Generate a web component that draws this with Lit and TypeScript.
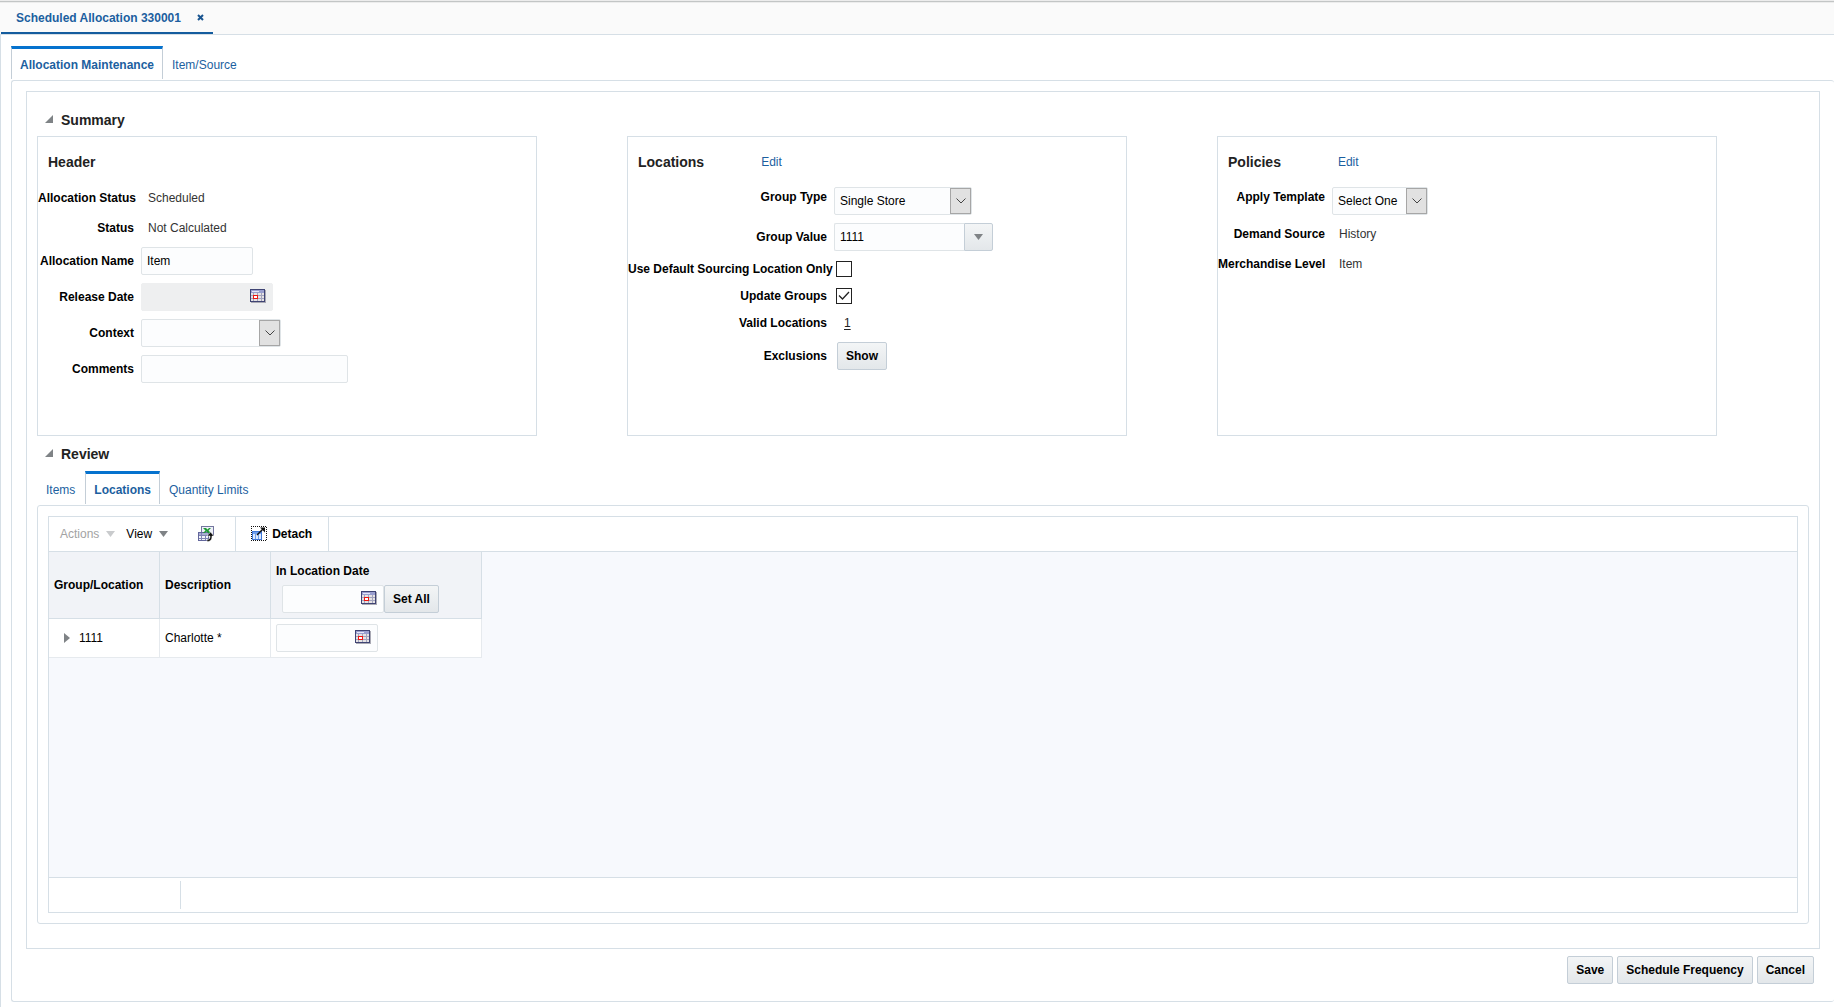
import { LitElement, html, css, svg, nothing } from "lit";
import { customElement } from "lit/decorators.js";
import { classMap } from "lit/directives/class-map.js";

const calendarIcon = svg`
  <svg class="icon" width="16" height="14" viewBox="0 0 16 14" shape-rendering="crispEdges" aria-hidden="true">
    <rect x="1" y="1" width="15" height="13" fill="#a9a9b4" />
    <rect x="0" y="0" width="15" height="13" fill="#3f4474" />
    <rect x="1" y="1" width="13" height="3" fill="#9a9fcf" />
    <rect x="2" y="2" width="7" height="1" fill="#e4e6f8" />
    <rect x="1" y="4" width="13" height="8" fill="#e6e3e4" />
    <path d="M1 6.5h13M1 9.5h13M3.5 4v8M7.5 4v8M11.5 4v8" stroke="#a3a4bd" fill="none" />
    <rect x="3.5" y="6.5" width="4" height="3" fill="#ffffff" stroke="#ee1510" />
  </svg>`;

const exportIcon = svg`
  <svg class="icon" width="16" height="16" viewBox="0 0 16 16" shape-rendering="crispEdges" aria-hidden="true">
    <rect x="3.5" y="0.5" width="12" height="9" fill="#eef0f8" stroke="#74779f" />
    <rect x="0.5" y="6.5" width="10" height="8" fill="#f3f4fa" stroke="#63679c" />
    <rect x="1" y="7" width="9" height="2" fill="#a9acd2" />
    <path d="M1 9.5h9M1 12.5h9M3.5 7v7M7.5 9v5" stroke="#7f83b3" fill="none" />
    <path d="M5 2h3l1.500 1.500L11 2h2l-2.500 2.500L13 7h-3L8.500 5.500 7 7H5l2.500-2.500z" fill="#1e9a34" shape-rendering="auto" />
    <path d="M12.500 6l3.500 4h-2c0 4-1.500 5.500-5 5.500v-2c2.500 0 3-1 3-3.500H9z" fill="#111" stroke="#fff" stroke-width="0.500" shape-rendering="auto" />
  </svg>`;

const detachIcon = svg`
  <svg class="icon" width="16" height="16" viewBox="0 0 16 16" shape-rendering="crispEdges" aria-hidden="true">
    <path d="M0 0.500h16M0 14.500h16M0.500 0v15M15.500 1v14" fill="none" stroke="#111" stroke-dasharray="1 1" />
    <rect x="1.500" y="5.500" width="9" height="8" fill="#dbe9ff" stroke="#3f78d8" />
    <rect x="2" y="6" width="8" height="2" fill="#6fa0ee" />
    <path d="M4.500 8v5M7.500 8v5" stroke="#6f9fe8" fill="none" />
    <path d="M6 9l6-6" stroke="#111" stroke-width="1.500" shape-rendering="auto" />
    <path d="M9 1.500H14v5z" fill="#111" shape-rendering="auto" />
  </svg>`;

const closeIcon = svg`
  <svg class="icon" width="7" height="7" viewBox="0 0 7 7" aria-hidden="true">
    <path d="M1 1l5 5M6 1L1 6" stroke="#1a5590" stroke-width="2" fill="none" />
  </svg>`;

const discloseIcon = svg`
  <svg class="icon" width="8" height="8" viewBox="0 0 8 8" aria-hidden="true"><path d="M8 0v8H0z" fill="#7f8386" /></svg>`;

const expandIcon = svg`
  <svg class="icon" width="6" height="10" viewBox="0 0 6 10" aria-hidden="true"><path d="M0 0l6 5-6 5z" fill="#7f8386" /></svg>`;

const downIcon = (fill: string) => svg`
  <svg class="icon" width="9" height="6" viewBox="0 0 9 6" aria-hidden="true"><path d="M0 0h9L4.500 6z" fill=${fill} /></svg>`;

interface Tab {
  text: string;
  active?: boolean;
}

@customElement("app-root")
export class AppRoot extends LitElement {
  static styles = css`
    :host {
      display: block;
      font: 12px/20px "Liberation Sans", Arial, sans-serif;
      color: #000;
      background: #fff;
    }
    * {
      box-sizing: border-box;
    }
    button,
    input,
    select {
      font: inherit;
      color: inherit;
      margin: 0;
    }
    h2,
    h3 {
      margin: 0;
      font-size: 14px;
      color: #222;
    }
    a {
      color: #1c5f9f;
      text-decoration: none;
    }
    .icon {
      display: block;
      flex: none;
    }
    .page {
      min-height: 100vh;
      display: flex;
      flex-direction: column;
    }
    .doc-bar {
      display: flex;
      height: 35px;
      padding-left: 1px;
      background: #fafafa;
      border-bottom: 1px solid #d6dfe6;
      box-shadow: inset 0 1px #ececec, inset 0 2px #c2c5c5, inset 0 3px #ececec;
    }
    .doc-tab {
      display: flex;
      align-items: center;
      gap: 16px;
      padding: 3px 9px 0 15px;
      border-bottom: 2px solid #145c9e;
      font-weight: bold;
    }
    .plain {
      border: 0;
      background: none;
      padding: 0;
      display: flex;
      align-items: center;
    }
    .body {
      flex: 1;
      display: flex;
      flex-direction: column;
      padding: 11px 0 5px 10px;
      border-left: 1px solid #d6dfe6;
    }
    .tabs {
      display: flex;
      height: 33px;
      margin-bottom: 1px;
    }
    .tab {
      padding: 9px 10px 0 9px;
    }
    .tab.active {
      padding: 6px 8px 0 8px;
      border: 1px solid #c4ced7;
      border-top: 3px solid #0572ce;
      border-bottom: 0;
      font-weight: bold;
    }
    .panel {
      flex: 1;
      display: flex;
      flex-direction: column;
      border: 1px solid #d6dfe6;
      border-radius: 3px;
    }
    .outer {
      padding: 10px 14px 17px 14px;
      border-right: 0;
    }
    .content {
      flex: 1;
      display: flex;
      flex-direction: column;
      padding: 18px 10px 24px 10px;
      border: 1px solid #d6dfe6;
    }
    .section-title {
      display: flex;
      align-items: center;
      gap: 8px;
      padding-left: 8px;
    }
    .section-title .plain {
      padding-bottom: 3px;
    }
    .cards {
      display: grid;
      grid-template-columns: repeat(3, 1fr);
      gap: 90px;
      margin: 6px 92px 8px 0;
    }
    .card {
      min-height: 300px;
      padding-top: 15px;
      border: 1px solid #d6dfe6;
    }
    .card-title {
      display: flex;
      gap: 57px;
      padding-left: 10px;
      margin-bottom: 11px;
    }
    .row {
      display: flex;
      align-items: center;
      gap: 7px;
      min-height: 30px;
    }
    .row.field {
      padding: 4px 0;
    }
    .row.tight {
      min-height: 27px;
    }
    .row.action {
      padding: 6px 0;
    }
    .row.top .label {
      align-self: flex-start;
    }
    .label {
      flex: none;
      width: 96px;
      text-align: right;
      white-space: nowrap;
      font-weight: bold;
    }
    .wide .label {
      width: 199px;
    }
    .medium .label {
      width: 107px;
    }
    .value {
      padding-left: 7px;
      color: #333;
    }
    .count {
      padding-left: 10px;
      color: #222;
      text-decoration: underline;
      text-underline-offset: 2px;
    }
    .box {
      height: 28px;
      padding: 0 5px;
      border: 1px solid #dfe4e7;
      border-radius: 2px;
      background: #fcfdfe;
    }
    .name {
      width: 112px;
    }
    .comments {
      width: 207px;
    }
    .date {
      display: flex;
      align-items: center;
      width: 102px;
      padding: 0 6px 2px 5px;
    }
    .date.disabled {
      width: 132px;
      background: #eeeff0;
      border-color: #eeeff0;
    }
    .date input {
      flex: 1;
      min-width: 0;
      border: 0;
      padding: 0;
      background: none;
    }
    .select {
      display: grid;
      width: 138px;
    }
    .select.context {
      width: 140px;
    }
    .select.template {
      width: 96px;
    }
    .select > * {
      grid-area: 1 / 1;
    }
    .select select {
      appearance: none;
      width: 100%;
      padding: 0 22px 0 5px;
    }
    .chevron {
      justify-self: end;
      align-self: center;
      display: grid;
      place-items: center;
      width: 21px;
      height: 26px;
      margin-right: 1px;
      border: 1px solid #a6a6a6;
      background: #e1e1e1;
      pointer-events: none;
    }
    .combo {
      display: flex;
      width: 159px;
    }
    .combo .box {
      flex: 1;
      min-width: 0;
      border-right: 0;
      border-radius: 2px 0 0 2px;
    }
    .btn {
      height: 28px;
      padding: 0 8px;
      border: 1px solid #c4ced7;
      border-radius: 2px;
      background: linear-gradient(#f3f5f6, #e3e7ea);
      font-weight: bold;
    }
    .combo .btn {
      padding: 0 9px;
      border-radius: 0 2px 2px 0;
    }
    .btn.show {
      margin-left: 3px;
    }
    .check {
      display: grid;
      place-items: center;
      margin-left: 2px;
    }
    .check > * {
      grid-area: 1 / 1;
    }
    .check input {
      appearance: none;
      width: 16px;
      height: 16px;
      border: 1px solid #222;
      background: #fff;
    }
    .check .icon {
      pointer-events: none;
    }
    .review-tabs {
      margin-top: 7px;
    }
    .review {
      padding: 10px;
    }
    .grid-frame {
      flex: 1;
      display: flex;
      flex-direction: column;
      border: 1px solid #d6dfe6;
    }
    .toolbar {
      display: flex;
      height: 35px;
      border-bottom: 1px solid #d6dfe6;
    }
    .tool-group {
      display: flex;
      align-items: center;
      gap: 11px;
      padding: 0 14px 0 11px;
      border-right: 1px solid #d6dfe6;
    }
    .tool-group.export {
      padding: 0 21px 0 15px;
    }
    .tool-group.detach {
      padding: 0 16px 0 15px;
    }
    .menu {
      gap: 7px;
    }
    .menu:disabled {
      color: #a3a3a3;
    }
    .detach .plain {
      gap: 5px;
      font-weight: bold;
    }
    .grid-body {
      flex: 1;
      background: #f7f9fd;
    }
    .table {
      border-collapse: separate;
      border-spacing: 0;
      table-layout: fixed;
      width: 433px;
    }
    .col-group,
    .col-desc {
      width: 111px;
    }
    th {
      height: 67px;
      padding: 0 5px;
      text-align: left;
      background: #f1f3f7;
      border-right: 1px solid #d6dfe6;
      border-bottom: 1px solid #d6dfe6;
    }
    .date-head {
      padding-top: 4px;
    }
    td {
      height: 39px;
      padding: 0 5px;
      background: #fff;
      border-right: 1px solid #e6eaee;
      border-bottom: 1px solid #e6eaee;
    }
    .set-all {
      display: flex;
      padding: 4px 0 0 6px;
    }
    .tree-cell {
      display: flex;
      align-items: center;
      gap: 9px;
      padding-left: 10px;
    }
    .grid-foot {
      height: 35px;
      padding: 3px 0;
      border-top: 1px solid #d6dfe6;
    }
    .foot-pane {
      width: 132px;
      height: 28px;
      border-right: 1px solid #d6dfe6;
    }
    .actions {
      display: flex;
      justify-content: flex-end;
      gap: 4px;
      padding: 7px 6px 0 0;
    }
  `;

  private tabs(items: Tab[], extra = "") {
    return html`<nav class="tabs ${extra}">
      ${items.map(
        (t) => html`<a href="#" class=${classMap({ tab: true, active: !!t.active })} aria-current=${t.active ? "page" : nothing}>${t.text}</a>`,
      )}
    </nav>`;
  }

  private textRow(label: string, value: string) {
    return html`<div class="row"><span class="label">${label}</span><span class="value">${value}</span></div>`;
  }

  private select(id: string, kind: string, value: string) {
    return html`<div class="select ${kind}">
      <select class="box" id=${id}>
        <option>${value}</option>
      </select>
      <span class="chevron">
        <svg class="icon" width="10" height="6" viewBox="0 0 10 6" aria-hidden="true">
          <path d="M0.500 0.500L5 5l4.500-4.500" fill="none" stroke="#444" />
        </svg>
      </span>
    </div>`;
  }

  private date(id: string, label: string, disabled = false) {
    return html`<div class=${classMap({ box: true, date: true, disabled })}>
      <input type="text" id=${id} aria-label=${label} ?disabled=${disabled} />
      <button class="plain" aria-label="Select date" ?disabled=${disabled}>${calendarIcon}</button>
    </div>`;
  }

  private check(id: string, label: string, checked: boolean) {
    return html`<div class="row tight">
      <label class="label" for=${id}>${label}</label>
      <span class="check">
        <input type="checkbox" id=${id} ?checked=${checked} />
        ${checked
          ? html`<svg class="icon" width="12" height="9" viewBox="0 0 12 9" aria-hidden="true">
              <path d="M1 4.500L4.500 8 11 1" fill="none" stroke="#222" stroke-width="1.300" />
            </svg>`
          : nothing}
      </span>
    </div>`;
  }

  private header() {
    return html`<section class="card">
      <div class="card-title"><h3>Header</h3></div>
      ${this.textRow("Allocation Status", "Scheduled")} ${this.textRow("Status", "Not Calculated")}
      <div class="row field">
        <label class="label" for="name">Allocation Name</label>
        <input class="box name" id="name" type="text" value="Item" />
      </div>
      <div class="row field">
        <label class="label" for="release">Release Date</label>
        ${this.date("release", "Release Date", true)}
      </div>
      <div class="row field">
        <label class="label" for="context">Context</label>
        ${this.select("context", "context", "")}
      </div>
      <div class="row field">
        <label class="label" for="comments">Comments</label>
        <input class="box comments" id="comments" type="text" />
      </div>
    </section>`;
  }

  private locations() {
    return html`<section class="card wide">
      <div class="card-title"><h3>Locations</h3><a href="#">Edit</a></div>
      <div class="row field top">
        <label class="label" for="group-type">Group Type</label>
        ${this.select("group-type", "", "Single Store")}
      </div>
      <div class="row field">
        <label class="label" for="group-value">Group Value</label>
        <div class="combo">
          <input class="box" id="group-value" type="text" value="1111" />
          <button class="btn" aria-label="Search group value">${downIcon("#7f8386")}</button>
        </div>
      </div>
      ${this.check("default-source", "Use Default Sourcing Location Only", false)}
      ${this.check("update-groups", "Update Groups", true)}
      <div class="row tight"><span class="label">Valid Locations</span><a href="#" class="count">1</a></div>
      <div class="row action">
        <span class="label">Exclusions</span>
        <button class="btn show">Show</button>
      </div>
    </section>`;
  }

  private policies() {
    return html`<section class="card medium">
      <div class="card-title"><h3>Policies</h3><a href="#">Edit</a></div>
      <div class="row field top">
        <label class="label" for="template">Apply Template</label>
        ${this.select("template", "template", "Select One")}
      </div>
      ${this.textRow("Demand Source", "History")} ${this.textRow("Merchandise Level", "Item")}
    </section>`;
  }

  private grid() {
    return html`<div class="grid-frame">
      <div class="toolbar">
        <div class="tool-group">
          <button class="plain menu" disabled>Actions ${downIcon("#c9cbcd")}</button>
          <button class="plain menu">View ${downIcon("#7f8386")}</button>
        </div>
        <div class="tool-group export">
          <button class="plain" aria-label="Export to Excel">${exportIcon}</button>
        </div>
        <div class="tool-group detach">
          <button class="plain">${detachIcon} Detach</button>
        </div>
      </div>
      <div class="grid-body">
        <table class="table">
          <colgroup>
            <col class="col-group" />
            <col class="col-desc" />
            <col />
          </colgroup>
          <thead>
            <tr>
              <th>Group/Location</th>
              <th>Description</th>
              <th class="date-head">
                In Location Date
                <div class="set-all">
                  ${this.date("all-dates", "In Location Date for all rows")}
                  <button class="btn">Set All</button>
                </div>
              </th>
            </tr>
          </thead>
          <tbody>
            <tr>
              <td>
                <div class="tree-cell">
                  <button class="plain" aria-label="Expand 1111">${expandIcon}</button>
                  1111
                </div>
              </td>
              <td>Charlotte *</td>
              <td>${this.date("row-date", "In Location Date for 1111")}</td>
            </tr>
          </tbody>
        </table>
      </div>
      <div class="grid-foot"><div class="foot-pane"></div></div>
    </div>`;
  }

  render() {
    return html`<div class="page">
      <header class="doc-bar">
        <div class="doc-tab">
          <a href="#">Scheduled Allocation 330001</a>
          <button class="plain" aria-label="Close tab">${closeIcon}</button>
        </div>
      </header>
      <main class="body">
        ${this.tabs([{ text: "Allocation Maintenance", active: true }, { text: "Item/Source" }])}
        <div class="panel outer">
          <div class="content">
            <div class="section-title">
              <button class="plain" aria-label="Collapse Summary">${discloseIcon}</button>
              <h2>Summary</h2>
            </div>
            <div class="cards">${this.header()} ${this.locations()} ${this.policies()}</div>
            <div class="section-title">
              <button class="plain" aria-label="Collapse Review">${discloseIcon}</button>
              <h2>Review</h2>
            </div>
            ${this.tabs([{ text: "Items" }, { text: "Locations", active: true }, { text: "Quantity Limits" }], "review-tabs")}
            <div class="panel review">${this.grid()}</div>
          </div>
          <div class="actions">
            <button class="btn">Save</button>
            <button class="btn">Schedule Frequency</button>
            <button class="btn">Cancel</button>
          </div>
        </div>
      </main>
    </div>`;
  }
}
